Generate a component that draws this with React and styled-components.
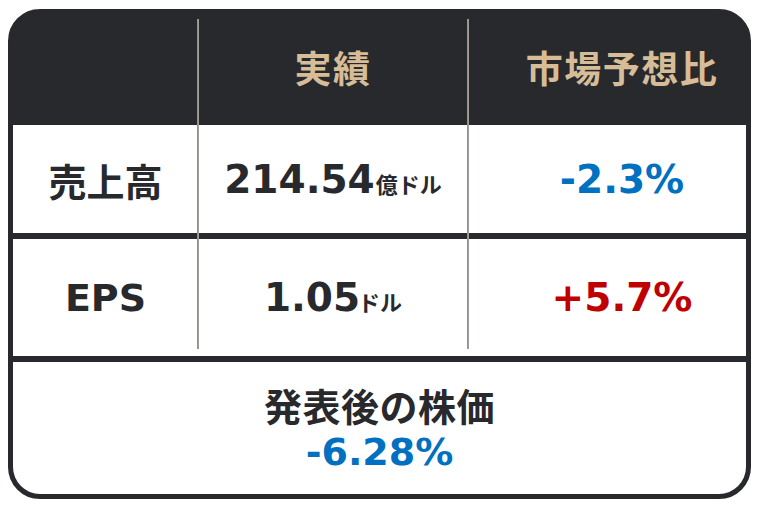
import React from "react";
import styled, { createGlobalStyle } from "styled-components";

const Global = createGlobalStyle`
  html, body { margin: 0; padding: 0; background: #ffffff; }
  body { padding: 9px 0 0 8px; font-family: "Noto Sans CJK JP", sans-serif; }
`;

const DARK = "#28292d";

const Card = styled.div`
  position: relative;
  box-sizing: border-box;
  width: 743px;
  height: 490px;
  border: 5px solid ${DARK};
  border-radius: 32px;
  overflow: hidden;
  background: ${DARK};
  display: grid;
  grid-template-rows: 111px 108px 123px 1fr;
`;

const Row = styled.div`
  display: grid;
  grid-template-columns: 185px 270px 1fr;
  background: ${(p) => (p.$head ? DARK : "#ffffff")};
  border-top: ${(p) => (p.$sep ? `6px solid ${DARK}` : "none")};
`;

const Cell = styled.div`
  display: flex;
  align-items: center;
  justify-content: center;
  padding-left: ${(p) => (p.$shift ? "30px" : "0")};
  padding-bottom: ${(p) => (p.$head ? "6px" : "0")};
`;

const HeadText = styled.span`
  font-family: "Noto Sans CJK JP", sans-serif;
  font-weight: 700;
  font-size: 37px;
  color: #d6bd98;
  letter-spacing: 1.5px;
`;

const Label = styled.span`
  font-family: "Noto Sans CJK JP", sans-serif;
  font-weight: 700;
  font-size: 38px;
  color: ${DARK};
`;

const LatinLabel = styled.span`
  font-family: "DejaVu Sans", sans-serif;
  font-weight: 700;
  font-size: 38px;
  color: ${DARK};
`;

const Value = styled.span`
  display: inline-flex;
  align-items: baseline;
  font-family: "DejaVu Sans", sans-serif;
  font-weight: 700;
  font-size: 39px;
  color: ${(p) => p.$color || DARK};
`;

const Unit = styled.span`
  font-family: "Noto Sans CJK JP", sans-serif;
  font-weight: 700;
  font-size: 22px;
  margin-left: ${(p) => (p.$tight ? "-2px" : "1px")};
`;

const Footer = styled.div`
  background: #ffffff;
  border-top: 6px solid ${DARK};
  display: flex;
  flex-direction: column;
  align-items: center;
  justify-content: flex-start;
  padding-top: 18px;
`;

const FooterTitle = styled.span`
  font-family: "Noto Sans CJK JP", sans-serif;
  font-weight: 700;
  font-size: 38px;
  letter-spacing: 0.5px;
  line-height: 50px;
  color: ${DARK};
`;

const FooterValue = styled.span`
  font-family: "DejaVu Sans", sans-serif;
  font-weight: 700;
  font-size: 38px;
  line-height: 44px;
  color: #0070c0;
`;

const VLine = styled.div`
  position: absolute;
  top: 5px;
  height: 330px;
  width: 2px;
  left: ${(p) => p.$x}px;
  background: linear-gradient(to right, #8f8b84, #a9a59e);
`;

export default function App() {
  return (
    <>
      <Global />
      <Card>
        <Row $head>
          <Cell $head />
          <Cell $head>
            <HeadText>実績</HeadText>
          </Cell>
          <Cell $head $shift>
            <HeadText>市場予想比</HeadText>
          </Cell>
        </Row>
        <Row>
          <Cell>
            <Label>売上高</Label>
          </Cell>
          <Cell>
            <Value>
              214.54<Unit>億ドル</Unit>
            </Value>
          </Cell>
          <Cell $shift>
            <Value $color="#0070c0">-2.3%</Value>
          </Cell>
        </Row>
        <Row $sep>
          <Cell>
            <LatinLabel>EPS</LatinLabel>
          </Cell>
          <Cell>
            <Value>
              1.05<Unit $tight>ドル</Unit>
            </Value>
          </Cell>
          <Cell $shift>
            <Value $color="#c00000">+5.7%</Value>
          </Cell>
        </Row>
        <Footer>
          <FooterTitle>発表後の株価</FooterTitle>
          <FooterValue>-6.28%</FooterValue>
        </Footer>
        <VLine $x={184} />
        <VLine $x={454} />
      </Card>
    </>
  );
}
